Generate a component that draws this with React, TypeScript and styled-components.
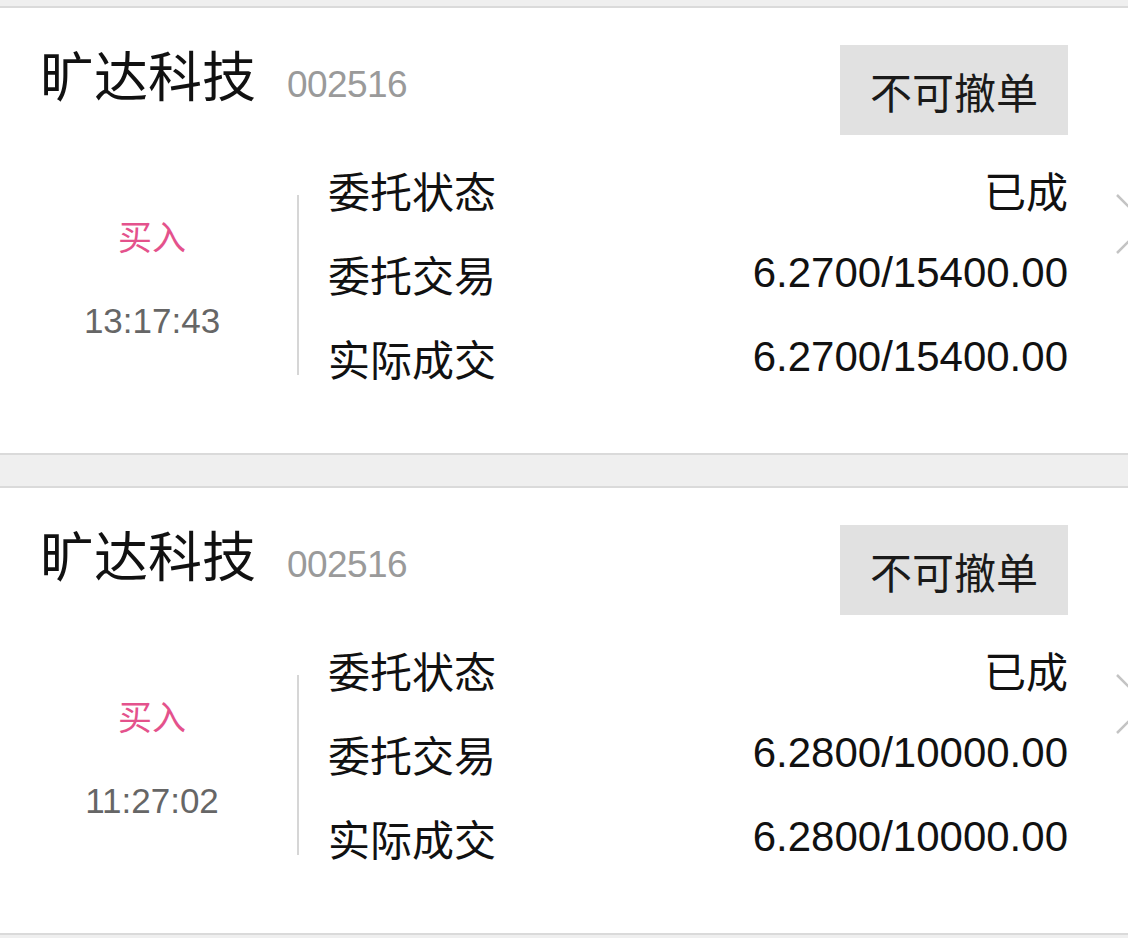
import React from 'react'
import styled, { createGlobalStyle } from 'styled-components'

const GlobalStyle = createGlobalStyle`
  body {
    margin: 0;
    background-color: #efefef;
    font-family: 'Liberation Sans', 'Noto Sans CJK SC', sans-serif;
    overflow: hidden;
  }
`

const Page = styled.div`
  padding-top: 6px;
  display: flex;
  flex-direction: column;
  gap: 31px;
`

const Card = styled.div`
  position: relative;
  overflow: hidden;
  background-color: #fff;
  border-top: 2px solid #dadada;
  border-bottom: 2px solid #dadada;
  padding: 37px 60px 0 40px;
  box-sizing: content-box;
  height: 408px;
`

const Header = styled.div`
  display: flex;
  justify-content: space-between;
  align-items: flex-start;
`

const TitleGroup = styled.div`
  display: flex;
  align-items: baseline;
  margin-top: 6px;
`

const StockName = styled.span`
  font-size: 54px;
  line-height: 54px;
  color: #111;
`

const StockCode = styled.span`
  font-size: 37px;
  letter-spacing: -0.6px;
  color: #9a9a9a;
  margin-left: 31px;
`

const CancelBtn = styled.button`
  font-family: 'Liberation Sans', 'Noto Sans CJK SC', sans-serif;
  font-size: 42px;
  color: #1a1a1a;
  width: 228px;
  height: 90px;
  padding: 0;
  border: none;
  border-radius: 0;
  background-color: #e1e1e1;
`

const Body = styled.div`
  display: flex;
  align-items: flex-start;
  margin-top: 12px;
`

const SideCol = styled.div`
  flex: 0 0 224px;
  display: flex;
  flex-direction: column;
  align-items: center;
  padding-top: 74px;
`

const Direction = styled.span<{ $color: string }>`
  font-size: 34px;
  line-height: 34px;
  color: ${(p) => p.$color};
`

const Time = styled.span`
  font-size: 35px;
  line-height: 35px;
  color: #666;
  margin-top: 48px;
`

const Divider = styled.div`
  width: 2px;
  height: 180px;
  margin: 48px 0 0 33px;
  background-color: #d6d6d6;
`

const Rows = styled.div`
  flex: 1;
  margin-left: 29px;
  display: flex;
  flex-direction: column;
`

const Row = styled.div`
  height: 84px;
  display: flex;
  justify-content: space-between;
  align-items: center;
  font-size: 42px;
  color: #111;
`

const Chevron = styled.svg`
  position: absolute;
  left: 1114px;
  top: 184px;
`

type Order = {
  name: string
  code: string
  time: string
  status: string
  entrust: string
  deal: string
}

const orders: Order[] = [
  {
    name: '旷达科技',
    code: '002516',
    time: '13:17:43',
    status: '已成',
    entrust: '6.2700/15400.00',
    deal: '6.2700/15400.00',
  },
  {
    name: '旷达科技',
    code: '002516',
    time: '11:27:02',
    status: '已成',
    entrust: '6.2800/10000.00',
    deal: '6.2800/10000.00',
  },
]

const OrderCard = ({ order }: { order: Order }) => (
  <Card>
    <Header>
      <TitleGroup>
        <StockName>{order.name}</StockName>
        <StockCode>{order.code}</StockCode>
      </TitleGroup>
      <CancelBtn>不可撤单</CancelBtn>
    </Header>
    <Body>
      <SideCol>
        <Direction $color='#e4528c'>买入</Direction>
        <Time>{order.time}</Time>
      </SideCol>
      <Divider />
      <Rows>
        <Row>
          <span>委托状态</span>
          <span>{order.status}</span>
        </Row>
        <Row>
          <span>委托交易</span>
          <span>{order.entrust}</span>
        </Row>
        <Row>
          <span>实际成交</span>
          <span>{order.deal}</span>
        </Row>
      </Rows>
    </Body>
    <Chevron width='40' height='64' viewBox='0 0 40 64'>
      <polyline
        points='3,3 32,32 3,61'
        fill='none'
        stroke='#c4c4c4'
        strokeWidth='2.5'
      />
    </Chevron>
  </Card>
)

const App = () => (
  <>
    <GlobalStyle />
    <Page>
      {orders.map((o) => (
        <OrderCard key={o.time} order={o} />
      ))}
    </Page>
  </>
)

export default App
